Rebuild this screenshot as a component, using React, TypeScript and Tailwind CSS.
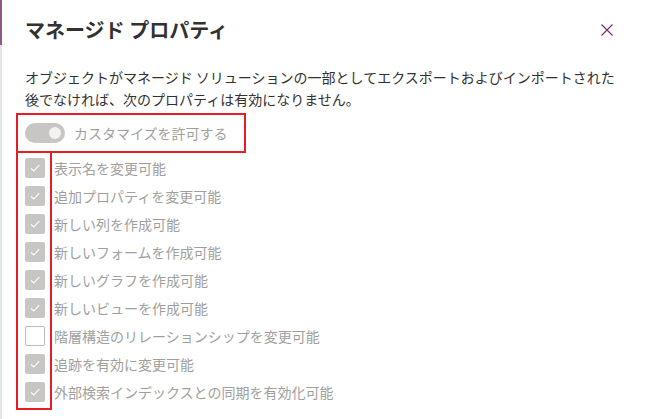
import React from 'react';

const labels: { text: string; checked: boolean }[] = [
  { text: '表示名を変更可能', checked: true },
  { text: '追加プロパティを変更可能', checked: true },
  { text: '新しい列を作成可能', checked: true },
  { text: '新しいフォームを作成可能', checked: true },
  { text: '新しいグラフを作成可能', checked: true },
  { text: '新しいビューを作成可能', checked: true },
  { text: '階層構造のリレーションシップを変更可能', checked: false },
  { text: '追跡を有効に変更可能', checked: true },
  { text: '外部検索インデックスとの同期を有効化可能', checked: true },
];

const CheckBox: React.FC<{ checked: boolean }> = ({ checked }) =>
  checked ? (
    <div className="w-5 h-5 rounded-[2px] bg-[#c8c6c4] flex items-center justify-center shrink-0">
      <svg width="12" height="12" viewBox="0 0 12 12" fill="none">
        <path d="M2 6.3 L4.8 9 L10.2 3.2" stroke="#ffffff" strokeWidth="1.1" />
      </svg>
    </div>
  ) : (
    <div className="w-5 h-5 rounded-[2px] bg-white border border-[#bdbab7] shrink-0" />
  );

export default function App() {
  return (
    <div
      className="w-[645px] h-[419px] bg-white flex overflow-hidden"
      style={{ fontFamily: '"Noto Sans CJK JP", "Noto Sans", sans-serif' }}
    >
      {/* edge of the page behind the panel */}
      <div className="w-[2px] flex flex-col shrink-0">
        <div className="h-[45px] bg-[#8c5a8c]" />
        <div className="flex-1 bg-[#e6e4e2]" />
      </div>

      <div className="flex-1 flex flex-col pl-[23px] pr-[32px] pt-[16px]">
        <div className="flex items-center justify-between h-[28px]">
          <h1 className="text-[20px] leading-[28px] font-bold text-[#323130]">マネージド プロパティ</h1>
          <svg width="12" height="12" viewBox="0 0 12 12" className="mr-[2px]">
            <path d="M0.5 0.5 L11.5 11.5 M11.5 0.5 L0.5 11.5" stroke="#742774" strokeWidth="1.1" />
          </svg>
        </div>

        <p className="mt-[22px] text-[14px] leading-[22px] text-[#323130] whitespace-nowrap">
          オブジェクトがマネージド ソリューションの一部としてエクスポートおよびインポートされた
          <br />
          後でなければ、次のプロパティは有効になりません。
        </p>

        <div className="mt-[3px] ml-[-9px] w-[230px] h-[40px] border-2 border-[#e81c26] flex items-center gap-[9px] pl-[7px]">
          <div className="w-10 h-5 rounded-full bg-[#c8c6c4] flex items-center justify-end pr-[4px]">
            <div className="w-3 h-3 rounded-full bg-[#f3f2f1]" />
          </div>
          <span className="text-[14px] text-[#a19f9d]">カスタマイズを許可する</span>
        </div>

        <div className="relative flex flex-col gap-2 pt-[5px]">
          {labels.map((l) => (
            <div key={l.text} className="flex items-center gap-[9px] h-5">
              <CheckBox checked={l.checked} />
              <span className="text-[14px] leading-5 text-[#a19f9d] whitespace-nowrap">{l.text}</span>
            </div>
          ))}
          {/* annotation frame around the check boxes */}
          <div className="absolute left-[-9px] top-[-2px] w-[36px] h-[259px] border-2 border-[#e81c26]" />
        </div>
      </div>
    </div>
  );
}
